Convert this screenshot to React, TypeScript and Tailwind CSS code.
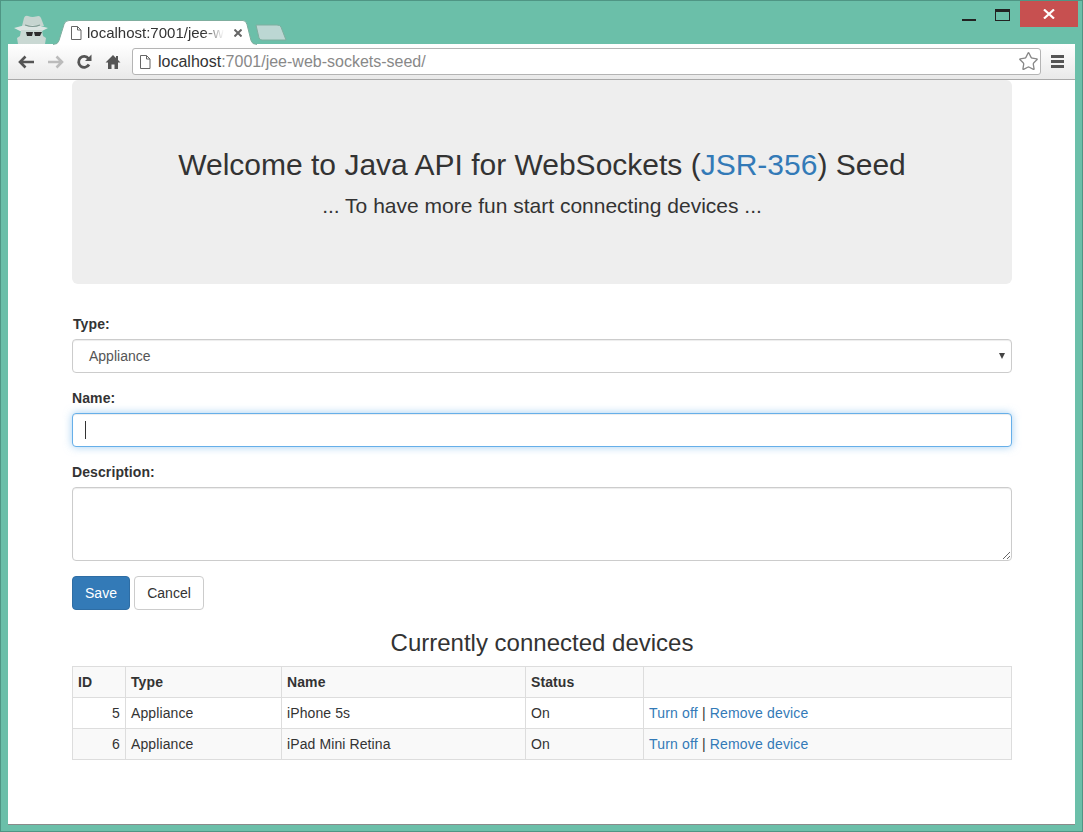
import { Star } from 'lucide-react';

const devices = [
  { id: 5, type: 'Appliance', name: 'iPhone 5s', status: 'On' },
  { id: 6, type: 'Appliance', name: 'iPad Mini Retina', status: 'On' },
];

function PageIcon({ className = '' }: { className?: string }) {
  return (
    <svg width="12" height="14" viewBox="0 0 12 14" className={className}>
      <path d="M1.5.5h6l3.500 3.500v9.500h-9.500z" fill="#fff" stroke="#666" />
      <path d="M7.500.5v3.500h3.500" fill="none" stroke="#666" />
    </svg>
  );
}

function Incognito() {
  return (
    <svg width="36" height="30" viewBox="0 0 36 30" className="absolute left-[13px] top-[14px]">
      <path d="M8 11 10 3q1-3 4-2 4 1.500 8 .5 4-1.500 5 1.500l3 8z" fill="#c6d5d0" />
      <path d="M0 13q17-6 34 0l-6 3H6z" fill="#dbe5e2" />
      <path d="M7 15h21l1 6 3 2-1 6H4l-1-6 3-2z" fill="#c9d8d3" />
      <path d="M11 10q8 3 15 0" fill="none" stroke="#7f9a92" strokeWidth="1.200" />
      <path d="M12 17h7l-1 4h-5zM20 17h8l-2 4h-5z" fill="#2c2c2c" />
    </svg>
  );
}

function ActiveTab() {
  return (
    <div className="relative w-[204px] h-[24px] ml-[50px] shrink-0">
      <svg width="204" height="25" viewBox="0 0 204 25" className="absolute left-0 top-0">
        <path
          d="M0 24.500q5 0 6-4l5-16q1-4 5-4h174q3 0 4 4l4 16q1 4 6 4"
          fill="#fff"
          stroke="#7fae9f"
        />
      </svg>
      <div className="relative flex items-center h-full pl-[17px] pt-[1px]">
        <PageIcon />
        <span className="ml-[5px] w-[137px] overflow-hidden whitespace-nowrap text-[15px] leading-[20px] text-[#333] [mask-image:linear-gradient(to_right,#000_85%,transparent)]">
          localhost:7001/jee-web-sockets-seed/
        </span>
        <svg width="8" height="8" viewBox="0 0 8 8" className="ml-[10px]">
          <path d="M.5.5l7 7M7.500.5l-7 7" stroke="#666" strokeWidth="2" />
        </svg>
      </div>
    </div>
  );
}

function Toolbar() {
  return (
    <div className="flex items-center h-[36px] shrink-0 rounded-t-[3px] border-b border-[#a9a9a9] bg-gradient-to-b from-white to-[#e9e9e9] pl-[10px] pr-[9px]">
      <svg width="17" height="14" viewBox="0 0 17 14">
        <path d="M7.500 1.500 2 7l5.500 5.500M2.500 7H16" fill="none" stroke="#555" strokeWidth="2.600" />
      </svg>
      <svg width="17" height="14" viewBox="0 0 17 14" className="ml-[12px]">
        <path d="M9.500 1.500 15 7l-5.500 5.500M14.500 7H1" fill="none" stroke="#bbb" strokeWidth="2.600" />
      </svg>
      <svg width="16" height="16" viewBox="0 0 16 16" className="ml-[12px]">
        <path d="M13 10.500A5.500 5.500 0 1 1 12.500 4.500" fill="none" stroke="#555" strokeWidth="2.800" />
        <path d="M9 7h6.500V.5z" fill="#555" />
      </svg>
      <svg width="16" height="16" viewBox="0 0 16 16" className="ml-[13px]">
        <path d="M8 1 .5 8.500h2.500V15h3.500v-4.500h3V15H13V8.500h2.500L13 6V2h-2v2z" fill="#555" />
      </svg>
      <div className="relative flex items-center ml-[11px] h-[27px] w-[909px] rounded-[3px] border border-[#b4b4b4] bg-white pl-[6px] pr-[1px]">
        <PageIcon />
        <span className="ml-[7px] text-[16px] text-[#333] whitespace-nowrap">
          localhost<span className="text-[#888]">:7001/jee-web-sockets-seed/</span>
        </span>
        <Star size={21} strokeWidth={1.500} className="ml-auto text-[#888]" />
      </div>
      <div className="ml-[10px] flex flex-col gap-[2px]">
        <div className="w-[13px] h-[3px] bg-[#555]" />
        <div className="w-[13px] h-[3px] bg-[#555]" />
        <div className="w-[13px] h-[3px] bg-[#555]" />
      </div>
    </div>
  );
}

export default function App() {
  return (
    <div className="relative flex flex-col w-[1083px] h-[832px] overflow-hidden border border-[#4f9584] bg-[#6bbfa9] font-['Liberation_Sans',Arial,sans-serif] text-[14px] text-[#333]">
      {/* window controls */}
      <div className="absolute right-[4px] top-0 flex items-start">
        <div className="w-[14px] h-[2px] mt-[18px] bg-[#222] mr-[19px]" />
        <div className="w-[15px] h-[12px] mt-[8px] border border-[#222] border-t-[3px] mr-[10px]" />
        <div className="flex items-center justify-center w-[58px] h-[26px] bg-[#c75050]">
          <svg width="12" height="10" viewBox="0 0 12 10">
            <path d="M1 .5l10 9M11 .5l-10 9" stroke="#fff" strokeWidth="2.200" />
          </svg>
        </div>
      </div>

      {/* tab strip */}
      <div className="relative flex items-end h-[43px] shrink-0 pl-[2px]">
        <Incognito />
        <ActiveTab />
        <svg width="32" height="17" viewBox="0 0 32 17" className="-ml-[2px] mb-[3px]">
          <path d="M1 1h21q3 0 4 2l5 13H7q-2 0-3-2z" fill="#bcd7d3" stroke="#7fae9f" />
        </svg>
      </div>

      <div className="flex flex-col flex-1 mx-[7px] mb-[7px] bg-white shadow-[0_1px_0_#8a8a8a]">
        <Toolbar />

        <main className="w-[940px] ml-[64px]">
          <div className="flex flex-col items-center h-[204px] rounded-[6px] bg-[#eee] pt-[65px]">
            <h1 className="text-[30px] leading-[39px] text-[#333] whitespace-nowrap">
              Welcome to Java API for WebSockets (<a className="text-[#337ab7]">JSR-356</a>) Seed
            </h1>
            <p className="mt-[7px] text-[21px] leading-[30px] text-[#333] whitespace-nowrap">
              ... To have more fun start connecting devices ...
            </p>
          </div>

          <form className="mt-[30px]">
            <label className="block ml-[1px] font-bold leading-[20px] tracking-[0.1px]">Type:</label>
            <div className="relative mt-[5px]">
              <div className="flex items-center h-[34px] rounded-[4px] border border-[#ccc] bg-white pl-[16px] text-[#555] shadow-[inset_0_1px_1px_rgba(0,0,0,0.075)]">
                Appliance
              </div>
              <svg width="6" height="6" viewBox="0 0 6 6" className="absolute right-[7px] top-[14px]">
                <path d="M0 0h6L3 6z" fill="#444" />
              </svg>
            </div>

            <label className="block mt-[15px] font-bold leading-[20px] tracking-[0.1px]">Name:</label>
            <div className="relative mt-[5px]">
              <input
                type="text"
                className="block w-full h-[34px] rounded-[4px] border border-[#66afe9] bg-white outline-none shadow-[inset_0_1px_1px_rgba(0,0,0,0.075),0_0_8px_rgba(102,175,233,0.6)]"
              />
              <div className="absolute left-[13px] top-[8px] w-px h-[18px] bg-[#333]" />
            </div>

            <label className="block mt-[15px] font-bold leading-[20px] tracking-[0.1px]">Description:</label>
            <textarea className="block mt-[5px] w-full h-[74px] rounded-[4px] border border-[#ccc] bg-white outline-none shadow-[inset_0_1px_1px_rgba(0,0,0,0.075)]" />

            <div className="flex gap-[4px] mt-[15px]">
              <button type="button" className="w-[58px] h-[34px] rounded-[4px] border border-[#2e6da4] bg-[#337ab7] text-white">
                Save
              </button>
              <button type="button" className="w-[70px] h-[34px] rounded-[4px] border border-[#ccc] bg-white text-[#333]">
                Cancel
              </button>
            </div>
          </form>

          <h3 className="mt-[20px] text-center text-[24px] leading-[26px] text-[#333]">
            Currently connected devices
          </h3>

          <table className="mt-[10px] w-[940px] table-fixed border-collapse border border-[#ddd] tracking-[0.1px]">
            <colgroup>
              <col className="w-[53px]" />
              <col className="w-[156px]" />
              <col className="w-[244px]" />
              <col className="w-[118px]" />
              <col />
            </colgroup>
            <thead>
              <tr className="h-[31px] bg-[#f9f9f9]">
                <th className="border border-[#ddd] px-[5px] text-left">ID</th>
                <th className="border border-[#ddd] px-[5px] text-left">Type</th>
                <th className="border border-[#ddd] px-[5px] text-left">Name</th>
                <th className="border border-[#ddd] px-[5px] text-left">Status</th>
                <th className="border border-[#ddd] px-[5px]" />
              </tr>
            </thead>
            <tbody>
              {devices.map((d, i) => (
                <tr key={d.id} className={`h-[31px] ${i % 2 === 1 ? 'bg-[#f9f9f9]' : 'bg-white'}`}>
                  <td className="border border-[#ddd] px-[5px] text-right">{d.id}</td>
                  <td className="border border-[#ddd] px-[5px]">{d.type}</td>
                  <td className="border border-[#ddd] px-[5px]">{d.name}</td>
                  <td className="border border-[#ddd] px-[5px]">{d.status}</td>
                  <td className="border border-[#ddd] px-[5px] tracking-[0.17px]">
                    <a className="text-[#337ab7]">Turn off</a> | <a className="text-[#337ab7]">Remove device</a>
                  </td>
                </tr>
              ))}
            </tbody>
          </table>
        </main>
      </div>
    </div>
  );
}
